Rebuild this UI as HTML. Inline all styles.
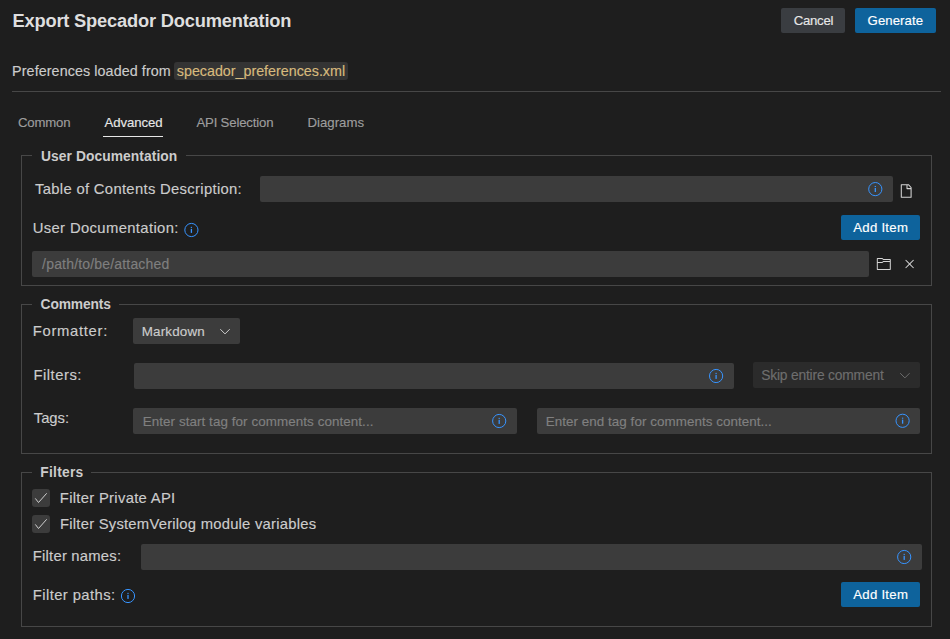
<!DOCTYPE html>
<html><head><meta charset="utf-8"><style>
html,body{margin:0;padding:0;width:950px;height:639px;overflow:hidden;background:#1e1e1e;font-family:"Liberation Sans",sans-serif;}
</style></head><body>
<div style="position:absolute;left:12px;top:91px;width:929px;height:1px;background:#474747;border-radius:0px;"></div><div style="position:absolute;left:781px;top:8px;width:64px;height:25px;background:#3a3d41;border-radius:2px;"></div><div style="position:absolute;left:855px;top:8px;width:81px;height:25px;background:#0e639c;border-radius:2px;"></div><div style="position:absolute;left:174px;top:62px;width:174px;height:18px;background:#343434;border-radius:3px;"></div><div style="position:absolute;left:103px;top:136px;width:60px;height:1px;background:#e7e7e7;border-radius:0px;"></div><div style="position:absolute;left:21px;top:155px;width:11px;height:1px;background:#474747;border-radius:0px;"></div><div style="position:absolute;left:186px;top:155px;width:746px;height:1px;background:#474747;border-radius:0px;"></div><div style="position:absolute;left:21px;top:155px;width:1px;height:131px;background:#474747;border-radius:0px;"></div><div style="position:absolute;left:931px;top:155px;width:1px;height:131px;background:#474747;border-radius:0px;"></div><div style="position:absolute;left:21px;top:285px;width:911px;height:1px;background:#474747;border-radius:0px;"></div><div style="position:absolute;left:21px;top:304px;width:11px;height:1px;background:#474747;border-radius:0px;"></div><div style="position:absolute;left:119px;top:304px;width:813px;height:1px;background:#474747;border-radius:0px;"></div><div style="position:absolute;left:21px;top:304px;width:1px;height:150px;background:#474747;border-radius:0px;"></div><div style="position:absolute;left:931px;top:304px;width:1px;height:150px;background:#474747;border-radius:0px;"></div><div style="position:absolute;left:21px;top:453px;width:911px;height:1px;background:#474747;border-radius:0px;"></div><div style="position:absolute;left:21px;top:472px;width:11px;height:1px;background:#474747;border-radius:0px;"></div><div style="position:absolute;left:91px;top:472px;width:841px;height:1px;background:#474747;border-radius:0px;"></div><div style="position:absolute;left:21px;top:472px;width:1px;height:155px;background:#474747;border-radius:0px;"></div><div style="position:absolute;left:931px;top:472px;width:1px;height:155px;background:#474747;border-radius:0px;"></div><div style="position:absolute;left:21px;top:626px;width:911px;height:1px;background:#474747;border-radius:0px;"></div><div style="position:absolute;left:260px;top:176px;width:633px;height:26px;background:#3c3c3c;border-radius:2px;"></div><div style="position:absolute;left:32px;top:251px;width:837px;height:26px;background:#3c3c3c;border-radius:2px;"></div><div style="position:absolute;left:133px;top:318px;width:107px;height:26px;background:#3c3c3c;border-radius:2px;"></div><div style="position:absolute;left:134px;top:363px;width:600px;height:26px;background:#3c3c3c;border-radius:2px;"></div><div style="position:absolute;left:133px;top:408px;width:384px;height:26px;background:#3c3c3c;border-radius:2px;"></div><div style="position:absolute;left:537px;top:408px;width:383px;height:26px;background:#3c3c3c;border-radius:2px;"></div><div style="position:absolute;left:141px;top:544px;width:781px;height:26px;background:#3c3c3c;border-radius:2px;"></div><div style="position:absolute;left:753px;top:362px;width:167px;height:26px;background:#2b2b2b;border-radius:2px;"></div><div style="position:absolute;left:841px;top:215px;width:79px;height:25px;background:#0e639c;border-radius:2px;"></div><div style="position:absolute;left:841px;top:582px;width:79px;height:25px;background:#0e639c;border-radius:2px;"></div><div style="position:absolute;left:32px;top:489px;width:18px;height:18px;background:#3c3c3c;border-radius:3px;"></div><div style="position:absolute;left:32px;top:515px;width:18px;height:18px;background:#3c3c3c;border-radius:3px;"></div><div style="position:absolute;left:12.50px;top:9.60px;font-size:18.3px;font-weight:700;line-height:21.96px;letter-spacing:-0.196px;color:#dedede;-webkit-text-stroke:0px #dedede;white-space:pre">Export Specador Documentation</div><div style="position:absolute;left:12.10px;top:62.80px;font-size:14.3px;font-weight:400;line-height:17.16px;letter-spacing:0.095px;color:#cccccc;-webkit-text-stroke:0.15px #cccccc;white-space:pre">Preferences loaded from</div><div style="position:absolute;left:176.80px;top:63.20px;font-size:14.3px;font-weight:400;line-height:17.16px;letter-spacing:-0.009px;color:#d7ba7d;-webkit-text-stroke:0.15px #d7ba7d;white-space:pre">specador_preferences.xml</div><div style="position:absolute;left:793.80px;top:13.05px;font-size:13.2px;font-weight:400;line-height:15.839999999999998px;letter-spacing:-0.300px;color:#e7e7e7;-webkit-text-stroke:0.15px #e7e7e7;white-space:pre">Cancel</div><div style="position:absolute;left:867.60px;top:13.10px;font-size:13.2px;font-weight:400;line-height:15.839999999999998px;letter-spacing:0.057px;color:#ffffff;-webkit-text-stroke:0.15px #ffffff;white-space:pre">Generate</div><div style="position:absolute;left:17.90px;top:115.30px;font-size:13.2px;font-weight:400;line-height:15.839999999999998px;letter-spacing:-0.160px;color:#9d9d9d;-webkit-text-stroke:0.15px #9d9d9d;white-space:pre">Common</div><div style="position:absolute;left:104.40px;top:114.90px;font-size:13.2px;font-weight:400;line-height:15.839999999999998px;letter-spacing:-0.057px;color:#e7e7e7;-webkit-text-stroke:0.15px #e7e7e7;white-space:pre">Advanced</div><div style="position:absolute;left:196.40px;top:115.30px;font-size:13.2px;font-weight:400;line-height:15.839999999999998px;letter-spacing:-0.175px;color:#9d9d9d;-webkit-text-stroke:0.15px #9d9d9d;white-space:pre">API Selection</div><div style="position:absolute;left:307.40px;top:115.30px;font-size:13.2px;font-weight:400;line-height:15.839999999999998px;letter-spacing:0.029px;color:#9d9d9d;-webkit-text-stroke:0.15px #9d9d9d;white-space:pre">Diagrams</div><div style="position:absolute;left:41.00px;top:148.80px;font-size:13.8px;font-weight:700;line-height:16.56px;letter-spacing:0.076px;color:#cccccc;-webkit-text-stroke:0px #cccccc;white-space:pre">User Documentation</div><div style="position:absolute;left:35.00px;top:181.00px;font-size:14.8px;font-weight:400;line-height:17.76px;letter-spacing:0.321px;color:#cccccc;-webkit-text-stroke:0.15px #cccccc;white-space:pre">Table of Contents Description:</div><div style="position:absolute;left:32.70px;top:219.90px;font-size:14.8px;font-weight:400;line-height:17.76px;letter-spacing:0.372px;color:#cccccc;-webkit-text-stroke:0.15px #cccccc;white-space:pre">User Documentation:</div><div style="position:absolute;left:42.10px;top:256.40px;font-size:14.0px;font-weight:400;line-height:16.8px;letter-spacing:0.179px;color:#7f7f7f;-webkit-text-stroke:0.15px #7f7f7f;white-space:pre">/path/to/be/attached</div><div style="position:absolute;left:853.30px;top:220.00px;font-size:13.2px;font-weight:400;line-height:15.839999999999998px;letter-spacing:0.257px;color:#ffffff;-webkit-text-stroke:0.15px #ffffff;white-space:pre">Add Item</div><div style="position:absolute;left:40.60px;top:296.60px;font-size:13.8px;font-weight:700;line-height:16.56px;letter-spacing:-0.129px;color:#cccccc;-webkit-text-stroke:0px #cccccc;white-space:pre">Comments</div><div style="position:absolute;left:32.80px;top:323.20px;font-size:14.8px;font-weight:400;line-height:17.76px;letter-spacing:0.689px;color:#cccccc;-webkit-text-stroke:0.15px #cccccc;white-space:pre">Formatter:</div><div style="position:absolute;left:141.80px;top:324.00px;font-size:13.4px;font-weight:400;line-height:16.08px;letter-spacing:0.171px;color:#cccccc;-webkit-text-stroke:0.15px #cccccc;white-space:pre">Markdown</div><div style="position:absolute;left:33.50px;top:367.20px;font-size:14.8px;font-weight:400;line-height:17.76px;letter-spacing:0.500px;color:#cccccc;-webkit-text-stroke:0.15px #cccccc;white-space:pre">Filters:</div><div style="position:absolute;left:761.20px;top:368.10px;font-size:13.8px;font-weight:400;line-height:16.56px;letter-spacing:-0.178px;color:#6e6e6e;-webkit-text-stroke:0.15px #6e6e6e;white-space:pre">Skip entire comment</div><div style="position:absolute;left:33.80px;top:410.00px;font-size:14.8px;font-weight:400;line-height:17.76px;letter-spacing:-0.025px;color:#cccccc;-webkit-text-stroke:0.15px #cccccc;white-space:pre">Tags:</div><div style="position:absolute;left:142.70px;top:414.30px;font-size:13.4px;font-weight:400;line-height:16.08px;letter-spacing:0.079px;color:#808080;-webkit-text-stroke:0.15px #808080;white-space:pre">Enter start tag for comments content...</div><div style="position:absolute;left:545.70px;top:414.30px;font-size:13.4px;font-weight:400;line-height:16.08px;letter-spacing:0.058px;color:#808080;-webkit-text-stroke:0.15px #808080;white-space:pre">Enter end tag for comments content...</div><div style="position:absolute;left:40.20px;top:464.90px;font-size:13.8px;font-weight:700;line-height:16.56px;letter-spacing:0.283px;color:#cccccc;-webkit-text-stroke:0px #cccccc;white-space:pre">Filters</div><div style="position:absolute;left:59.80px;top:489.70px;font-size:14.8px;font-weight:400;line-height:17.76px;letter-spacing:0.306px;color:#cccccc;-webkit-text-stroke:0.15px #cccccc;white-space:pre">Filter Private API</div><div style="position:absolute;left:60.00px;top:516.10px;font-size:14.8px;font-weight:400;line-height:17.76px;letter-spacing:0.236px;color:#cccccc;-webkit-text-stroke:0.15px #cccccc;white-space:pre">Filter SystemVerilog module variables</div><div style="position:absolute;left:32.80px;top:548.10px;font-size:14.8px;font-weight:400;line-height:17.76px;letter-spacing:0.225px;color:#cccccc;-webkit-text-stroke:0.15px #cccccc;white-space:pre">Filter names:</div><div style="position:absolute;left:32.80px;top:586.80px;font-size:14.8px;font-weight:400;line-height:17.76px;letter-spacing:0.417px;color:#cccccc;-webkit-text-stroke:0.15px #cccccc;white-space:pre">Filter paths:</div><div style="position:absolute;left:853.30px;top:587.00px;font-size:13.2px;font-weight:400;line-height:15.839999999999998px;letter-spacing:0.257px;color:#ffffff;-webkit-text-stroke:0.15px #ffffff;white-space:pre">Add Item</div>
<svg width="950" height="639" viewBox="0 0 950 639" style="position:absolute;left:0;top:0"><circle cx="191.4" cy="230.0" r="6.6" fill="none" stroke="#3794ff" stroke-width="1.0"/><rect x="190.75" y="226.85" width="1.3" height="1.05" fill="#3794ff"/><rect x="190.75" y="228.85" width="1.3" height="4.05" fill="#3794ff"/><circle cx="875.3" cy="189.1" r="6.6" fill="none" stroke="#3794ff" stroke-width="1.0"/><rect x="874.65" y="185.95" width="1.3" height="1.05" fill="#3794ff"/><rect x="874.65" y="187.95" width="1.3" height="4.05" fill="#3794ff"/><circle cx="716.1" cy="376.0" r="6.6" fill="none" stroke="#3794ff" stroke-width="1.0"/><rect x="715.45" y="372.85" width="1.3" height="1.05" fill="#3794ff"/><rect x="715.45" y="374.85" width="1.3" height="4.05" fill="#3794ff"/><circle cx="499.2" cy="421.0" r="6.6" fill="none" stroke="#3794ff" stroke-width="1.0"/><rect x="498.55" y="417.85" width="1.3" height="1.05" fill="#3794ff"/><rect x="498.55" y="419.85" width="1.3" height="4.05" fill="#3794ff"/><circle cx="902.6" cy="420.8" r="6.6" fill="none" stroke="#3794ff" stroke-width="1.0"/><rect x="901.95" y="417.65000000000003" width="1.3" height="1.05" fill="#3794ff"/><rect x="901.95" y="419.65000000000003" width="1.3" height="4.05" fill="#3794ff"/><circle cx="904.2" cy="557.0" r="6.6" fill="none" stroke="#3794ff" stroke-width="1.0"/><rect x="903.5500000000001" y="553.85" width="1.3" height="1.05" fill="#3794ff"/><rect x="903.5500000000001" y="555.85" width="1.3" height="4.05" fill="#3794ff"/><circle cx="128.0" cy="596.0" r="6.6" fill="none" stroke="#3794ff" stroke-width="1.0"/><rect x="127.35" y="592.85" width="1.3" height="1.05" fill="#3794ff"/><rect x="127.35" y="594.85" width="1.3" height="4.05" fill="#3794ff"/><path d="M901.3,184.7 H908.4 L911.1,187.5 V197.2 H901.3 Z M907.0,184.7 V188.6 H911" fill="none" stroke="#d4d4d4" stroke-width="1.05" stroke-linejoin="round"/><g transform="translate(875.8,256)"><path fill="#d4d4d4" d="M14.5 3H7.71l-.85-.85L6.51 2h-5l-.5.5v11l.5.5h13l.5-.5v-10L14.5 3zm-.51 8.49V13h-12V7h4.49l.35-.15.86-.86H14v1.5l-.01 4zm0-6.49h-6.5l-.35.15-.86.86H2v-3h4.29l.85.85.36.15H14l-.01.99z"/></g><g transform="translate(901.6,256)"><path fill="#d4d4d4" d="M8 8.707l3.646 3.647.708-.707L8.707 8l3.647-3.646-.707-.708L8 7.293 4.354 3.646l-.707.708L7.293 8l-3.646 3.646.707.708L8 8.707z"/></g><polyline points="220.3,329.2 225,333.9 229.7,329.2" fill="none" stroke="#d0d0d0" stroke-width="1"/><polyline points="900.2,373.2 904.9,377.9 909.6,373.2" fill="none" stroke="#6b6b6b" stroke-width="1"/><polyline points="35.3,498.4 38.5,502.5 46.7,493.3" fill="none" stroke="#d0d0d0" stroke-width="1"/><polyline points="35.3,524.4 38.5,528.5 46.7,519.3" fill="none" stroke="#d0d0d0" stroke-width="1"/></svg>
</body></html>
